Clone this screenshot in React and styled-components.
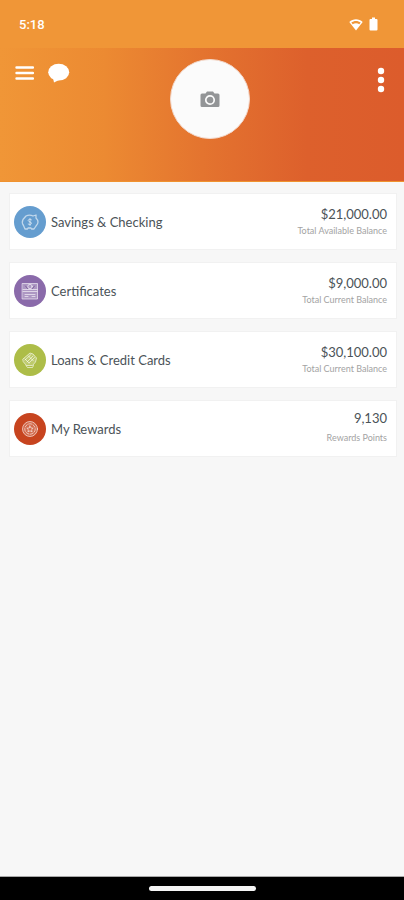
import styled, { createGlobalStyle } from "styled-components";

const GlobalStyle = createGlobalStyle`
  * {
    box-sizing: border-box;
  }
  body {
    margin: 0;
    background-color: #f7f7f7;
    font-family: Lato, "Open Sans", sans-serif;
  }
  button {
    display: flex;
    padding: 0;
    border: none;
    background: none;
    cursor: pointer;
  }
`;

const Screen = styled.div`
  display: flex;
  flex-direction: column;
  min-height: 100vh;
`;

const StatusBar = styled.div`
  display: flex;
  align-items: center;
  justify-content: space-between;
  height: 48px;
  padding: 0 26px 0 19px;
  background-color: #f09637;
  color: #ffffff;
`;

const Clock = styled.span`
  font-family: Roboto, sans-serif;
  font-size: 13px;
  font-weight: 500;
`;

const StatusIcons = styled.div`
  display: flex;
  align-items: center;
  gap: 6px;
`;

const Header = styled.header`
  display: grid;
  grid-template-columns: 1fr auto 1fr;
  align-items: start;
  height: 134px;
  padding: 11px 16px 11px 15px;
  border-bottom: 1px solid #f0922f;
  background: linear-gradient(to right, #f09637 0%, #ec8a32 26%, #e4742f 50%, #dd602c 76%, #dc5c2c 100%);
`;

const HeaderActions = styled.div`
  display: flex;
  gap: 14px;
  padding-top: 4px;
`;

const MoreButton = styled.button`
  justify-self: end;
  margin-top: 8px;
`;

const Avatar = styled.button`
  && {
    align-items: center;
    justify-content: center;
    width: 80px;
    height: 80px;
    margin-left: 16px;
    border: 1px solid #f3d9cc;
    border-radius: 50%;
    background-color: #fbfbfb;
  }
`;

const AccountList = styled.main`
  display: flex;
  flex: 1;
  flex-direction: column;
  gap: 12px;
  padding: 11px 7px 12px 9px;
`;

const AccountRow = styled.a`
  display: flex;
  align-items: center;
  height: 57px;
  padding: 0 9px 0 4px;
  border: 1px solid #f1f1f1;
  background-color: #ffffff;
  color: #4b5358;
  text-decoration: none;
`;

const AccountIcon = styled.span`
  display: flex;
  align-items: center;
  justify-content: center;
  width: 32px;
  height: 32px;
  border-radius: 50%;
  background-color: ${(props) => props.$color};
`;

const AccountName = styled.span`
  flex: 1;
  margin-left: 5px;
  font-size: 13px;
  line-height: 18px;
`;

const Totals = styled.div`
  display: flex;
  flex-direction: column;
  gap: ${(props) => (props.$spaced ? "3px" : "0")};
  padding-bottom: ${(props) => (props.$spaced ? "3px" : "0")};
  text-align: right;
`;

const Amount = styled.span`
  font-size: 13px;
  line-height: 18px;
`;

const Caption = styled.span`
  color: #a3a3a3;
  font-size: 9px;
  line-height: 16px;
`;

const NavigationBar = styled.footer`
  display: flex;
  justify-content: center;
  height: 24px;
  padding-top: 9px;
  border-top: 1px solid #a8a8a8;
  background-color: #000000;
`;

const HomeHandle = styled.div`
  width: 107px;
  height: 5px;
  border-radius: 3px;
  background-color: #f5f5f5;
`;

const WifiIcon = () => (
  <svg width="14" height="13" viewBox="0 0 14 13">
    <path d="M7 12.5 0.3 4C4 .2 10 .2 13.700 4Z" fill="#fff" />
    <path d="M2.300 4.500C5 2.400 9 2.400 11.700 4.500L10.300 6.200C8.500 5 5.500 5 3.700 6.200Z" fill="#f09637" />
  </svg>
);

const BatteryIcon = () => (
  <svg width="9" height="14" viewBox="0 0 9 14">
    <path d="M3 0.500h3v1.500h1.500a1 1 0 0 1 1 1v9.500a1 1 0 0 1-1 1h-6a1 1 0 0 1-1-1v-9.500a1 1 0 0 1 1-1h1.500z" fill="#fff" />
  </svg>
);

const MenuIcon = () => (
  <svg width="19" height="20" viewBox="0 0 19 20" fill="none" stroke="#fff" strokeWidth="2.400" strokeLinecap="round">
    <path d="M1.500 4.500h16.500M1.500 10h16.500M1.500 15.500h16.500" />
  </svg>
);

const ChatIcon = () => (
  <svg width="22" height="20" viewBox="0 0 22 20" fill="#fff">
    <ellipse cx="10.700" cy="9.200" rx="10.500" ry="8.400" />
    <path d="M5 15 6 19.500 11 17Z" />
  </svg>
);

const MoreIcon = () => (
  <svg width="16" height="26" viewBox="0 0 16 26" fill="#fff">
    <circle cx="9" cy="4" r="3.200" />
    <circle cx="9" cy="13" r="3.200" />
    <circle cx="9" cy="22" r="3.200" />
  </svg>
);

const CameraIcon = () => (
  <svg width="20" height="17" viewBox="0 0 20 17">
    <path
      d="M7 .5h6l1.500 2h3.500a1.500 1.500 0 0 1 1.500 1.500v10.500a1.500 1.500 0 0 1-1.500 1.500h-16a1.500 1.500 0 0 1-1.500-1.500v-10.500a1.500 1.500 0 0 1 1.500-1.500h3.500z"
      fill="#939597"
    />
    <circle cx="10" cy="9" r="4.200" fill="none" stroke="#fbfbfb" strokeWidth="1.700" />
  </svg>
);

const LineIcon = ({ children }) => (
  <svg
    width="20"
    height="20"
    viewBox="0 0 20 20"
    fill="none"
    stroke="#fff"
    strokeOpacity="0.6"
    strokeLinecap="round"
    strokeLinejoin="round"
  >
    {children}
  </svg>
);

const PiggyIcon = () => (
  <LineIcon>
    <path
      d="M6 4C8 3 11 3 13 4l3-1v3c1 1 2 2 2 4s-1 3-2 4l-2 3h-2.500l-.500-1H8l-.500 1H5l-1.500-3.500C2 11.500 2 9.500 3 7.500z"
      strokeWidth="1.300"
    />
    <path d="M11.500 7.800C9.500 6.700 7.700 7.500 8.300 8.900s3.200.9 3.200 2.200-1.500 1.700-3.300 1M10 6.500v7" />
  </LineIcon>
);

const CertificateIcon = () => (
  <LineIcon>
    <rect x="2.500" y="2.500" width="15" height="15.500" fill="#fff" fillOpacity="0.300" />
    <path d="M3 8.500h14M3 10.500h14M5 13.500h10M5 15.500h3M12 15.500h3" />
    <path d="m5.500 5 2 2.500M14.500 5l-2 2.500" stroke="#6f5090" strokeOpacity="0.800" />
    <circle cx="10" cy="5.500" r="2.200" />
  </LineIcon>
);

const LoanIcon = () => (
  <LineIcon>
    <path d="m3 9 7-6 3 1 3.500 4-1 4-3 3.500H6.500L3.500 12z" fill="#fff" fillOpacity="0.200" />
    <path d="m5 10 6-5.500M7 12l6-6M9 13l5.500-5.500M5 9l4 4M8.500 6l5 5M6 15.500l1.500 2h5l1-2" />
  </LineIcon>
);

const RewardsIcon = () => (
  <LineIcon>
    <circle cx="10" cy="10" r="7.500" fill="#fff" fillOpacity="0.200" />
    <circle cx="10" cy="10" r="5.200" strokeDasharray="3 1.500" />
    <path d="m10 7 1 2 2.200.2-1.600 1.500.5 2.200L10 11.800l-2.100 1.100.5-2.200-1.600-1.500L9 9z" />
  </LineIcon>
);

const accounts = [
  { name: "Savings & Checking", amount: "$21,000.00", caption: "Total Available Balance", color: "#659dcf", Icon: PiggyIcon },
  { name: "Certificates", amount: "$9,000.00", caption: "Total Current Balance", color: "#8a6aaa", Icon: CertificateIcon },
  { name: "Loans & Credit Cards", amount: "$30,100.00", caption: "Total Current Balance", color: "#adbd48", Icon: LoanIcon },
  { name: "My Rewards", amount: "9,130", caption: "Rewards Points", color: "#c7441f", Icon: RewardsIcon, spaced: true },
];

export default function App() {
  return (
    <Screen>
      <GlobalStyle />
      <StatusBar>
        <Clock>5:18</Clock>
        <StatusIcons>
          <WifiIcon />
          <BatteryIcon />
        </StatusIcons>
      </StatusBar>
      <Header>
        <HeaderActions>
          <button aria-label="Menu"><MenuIcon /></button>
          <button aria-label="Messages"><ChatIcon /></button>
        </HeaderActions>
        <Avatar aria-label="Change photo"><CameraIcon /></Avatar>
        <MoreButton aria-label="More options"><MoreIcon /></MoreButton>
      </Header>
      <AccountList>
        {accounts.map(({ name, amount, caption, color, Icon, spaced }) => (
          <AccountRow href="#" key={name}>
            <AccountIcon $color={color}><Icon /></AccountIcon>
            <AccountName>{name}</AccountName>
            <Totals $spaced={spaced}>
              <Amount>{amount}</Amount>
              <Caption>{caption}</Caption>
            </Totals>
          </AccountRow>
        ))}
      </AccountList>
      <NavigationBar>
        <HomeHandle />
      </NavigationBar>
    </Screen>
  );
}
